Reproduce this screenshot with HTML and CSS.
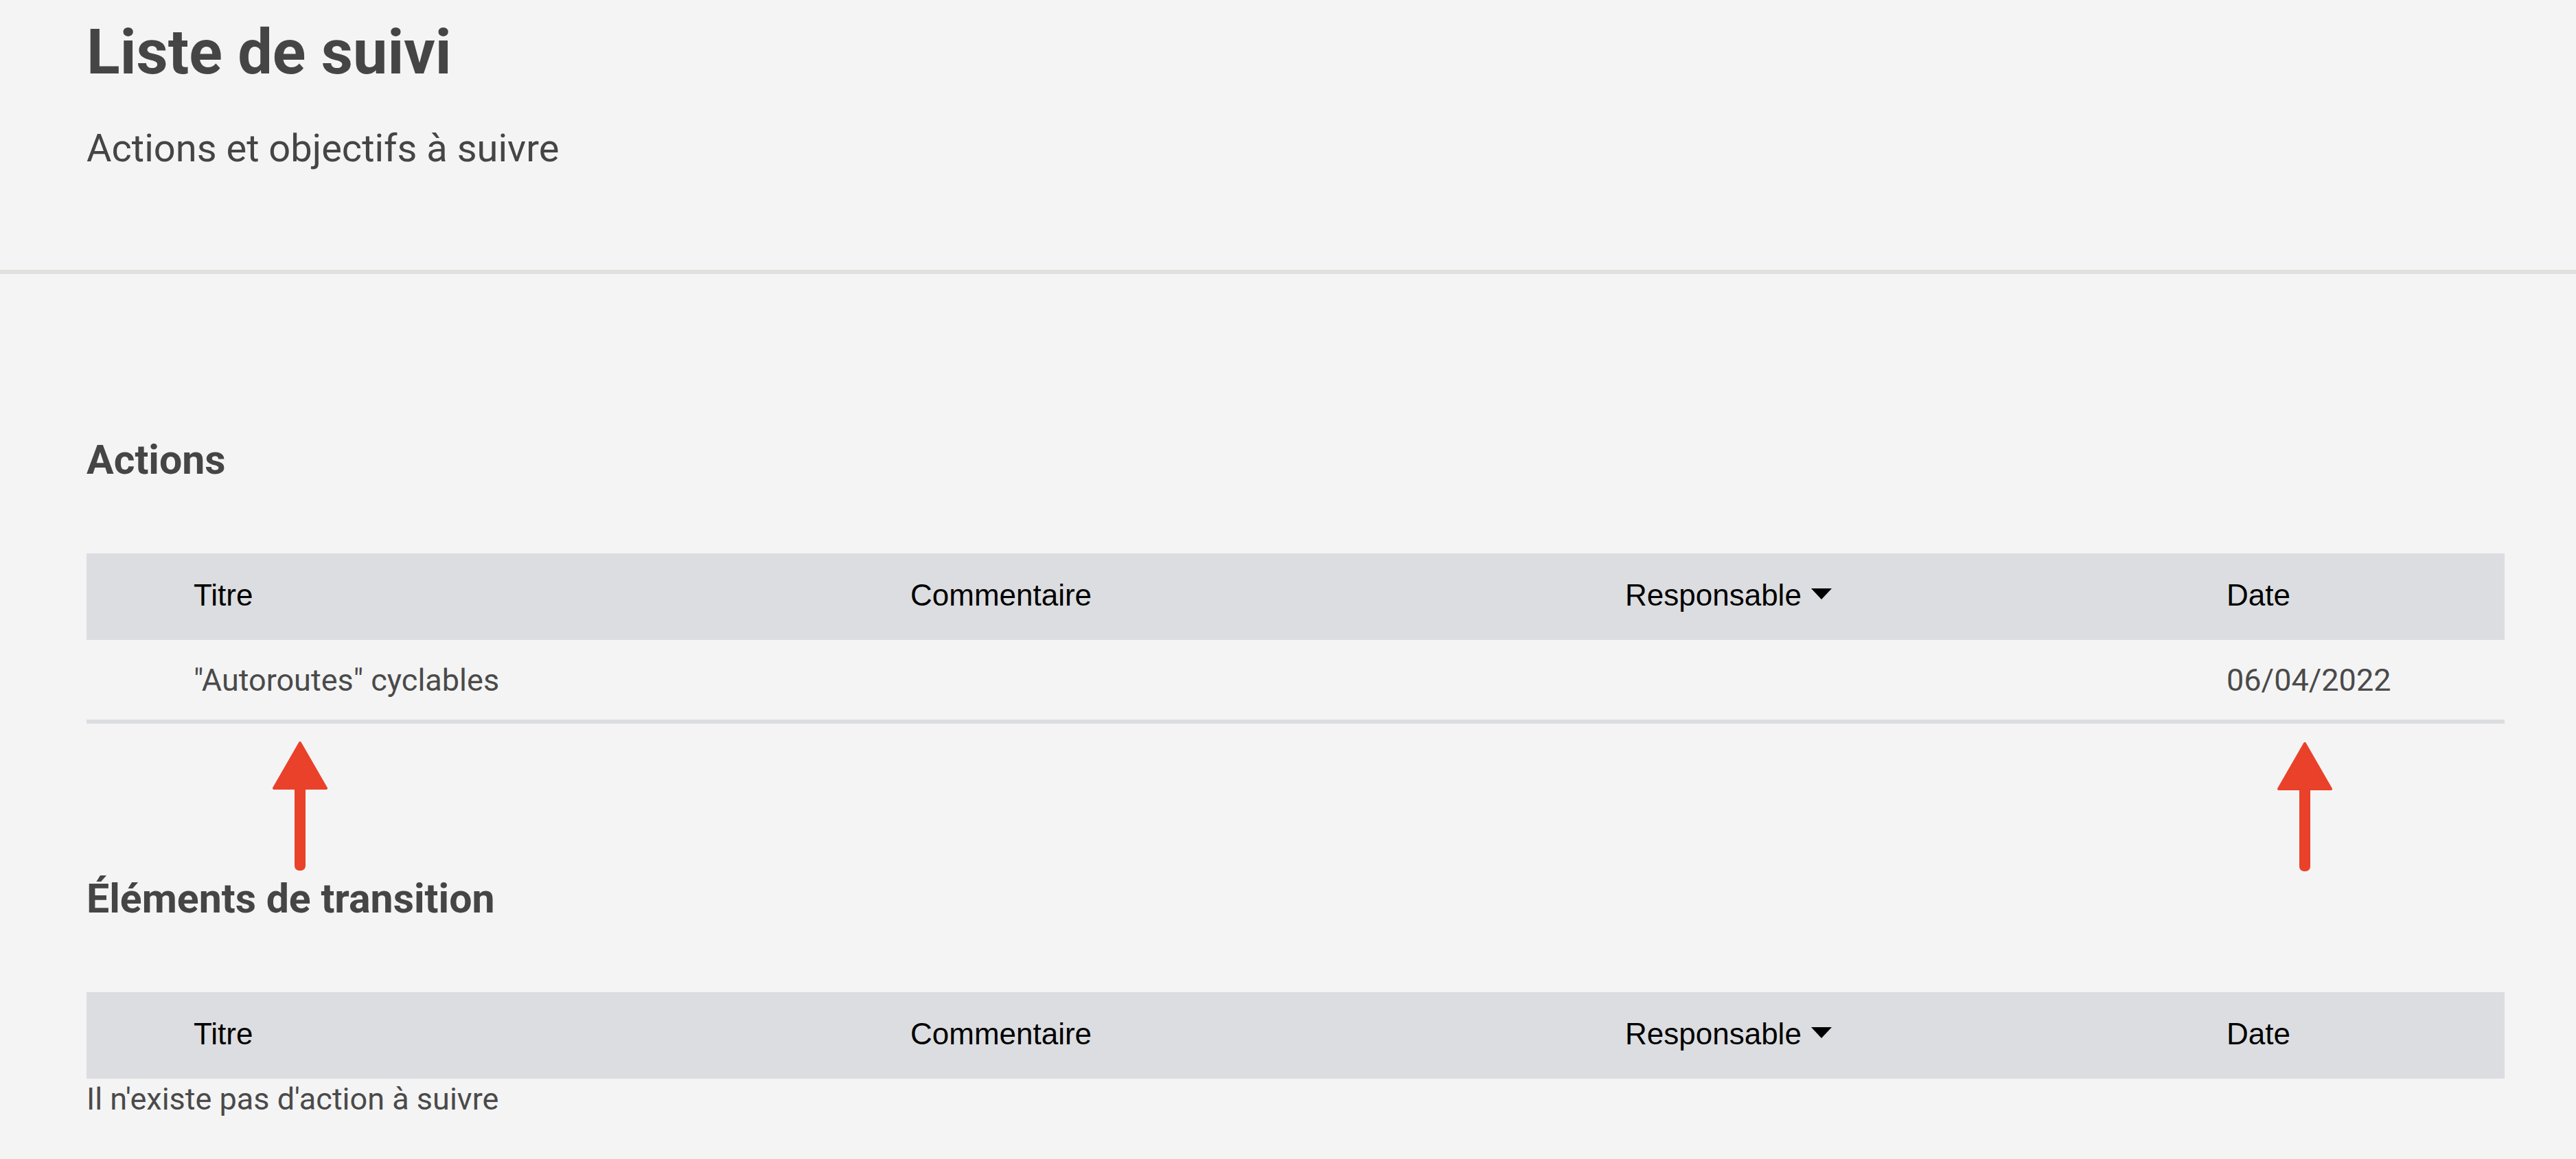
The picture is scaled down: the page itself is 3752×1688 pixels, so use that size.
FILE: index.html
```html
<!DOCTYPE html>
<html lang="fr">
<head>
    <meta charset="UTF-8">
    <meta name="viewport" content="width=device-width, initial-scale=1.0">
    <title>Liste de suivi</title>
    <link rel="stylesheet" href="styles.css">
</head>
<body>
    <header class="page-header">
        <h1>Liste de suivi</h1>
        <p class="subtitle">Actions et objectifs à suivre</p>
    </header>

    <main class="content">
        <section class="block">
            <h2>Actions</h2>
            <table class="follow-table">
                <colgroup>
                    <col class="col-title">
                    <col class="col-comment">
                    <col class="col-owner">
                    <col class="col-date">
                </colgroup>
                <thead>
                    <tr>
                        <th>Titre</th>
                        <th>Commentaire</th>
                        <th>Responsable<span class="sort-caret"></span></th>
                        <th>Date</th>
                    </tr>
                </thead>
                <tbody>
                    <tr>
                        <td>"Autoroutes" cyclables</td>
                        <td></td>
                        <td></td>
                        <td>06/04/2022</td>
                    </tr>
                </tbody>
            </table>
        </section>

        <section class="block">
            <h2>Éléments de transition</h2>
            <table class="follow-table">
                <colgroup>
                    <col class="col-title">
                    <col class="col-comment">
                    <col class="col-owner">
                    <col class="col-date">
                </colgroup>
                <thead>
                    <tr>
                        <th>Titre</th>
                        <th>Commentaire</th>
                        <th>Responsable<span class="sort-caret"></span></th>
                        <th>Date</th>
                    </tr>
                </thead>
            </table>
            <p class="empty">Il n'existe pas d'action à suivre</p>
        </section>
    </main>

    <!-- red pointers under the title and date cells -->
    <svg class="pointer pointer-title" viewBox="0 0 80 188">
        <path d="M40 2 L78 68 L2 68 Z" fill="#e9412a" stroke="#e9412a" stroke-width="4" stroke-linejoin="round"/>
        <rect x="32" y="60" width="16" height="128" rx="7" fill="#e9412a"/>
    </svg>
    <svg class="pointer pointer-date" viewBox="0 0 80 188">
        <path d="M40 2 L78 68 L2 68 Z" fill="#e9412a" stroke="#e9412a" stroke-width="4" stroke-linejoin="round"/>
        <rect x="32" y="60" width="16" height="128" rx="7" fill="#e9412a"/>
    </svg>
</body>
</html>
```

FILE: styles.css
```css
body {
    margin: 0;
    background-color: #f4f4f4;
    font-family: 'Roboto', 'Liberation Sans', sans-serif;
    color: #454545;
    position: relative;
}

.page-header {
    padding: 24px 104px 143px 126px;
    border-bottom: 6px solid #e0e1de;
}

h1 {
    margin: 0;
    font-size: 90px;
    line-height: 106px;
    font-weight: 700;
}

.subtitle {
    margin: 52px 0 0;
    font-size: 56px;
    line-height: 68px;
}

.content {
    padding: 236px 104px 0 126px;
}

.block + .block {
    margin-top: 220px;
}

h2 {
    margin: 0 0 101px;
    font-size: 59px;
    line-height: 70px;
    font-weight: 700;
}

.follow-table {
    width: 100%;
    table-layout: fixed;
    border-collapse: collapse;
}

.col-title { width: 1200px; }
.col-comment { width: 1041px; }
.col-owner { width: 876px; }
.col-date { width: 405px; }

.follow-table th,
.follow-table td {
    padding: 0;
    text-align: left;
}

.follow-table th:first-child,
.follow-table td:first-child {
    padding-left: 156px;
}

.follow-table thead tr {
    background-color: #dcdde0;
    height: 126px;
}

.follow-table th {
    font-family: 'Liberation Sans', Arial, sans-serif;
    font-size: 44px;
    font-weight: 400;
    color: #000;
    padding-bottom: 4px;
}

.sort-caret {
    display: inline-block;
    width: 0;
    height: 0;
    margin-left: 14px;
    border-left: 15px solid transparent;
    border-right: 15px solid transparent;
    border-top: 16px solid #000;
    vertical-align: 9px;
}

.follow-table tbody tr {
    height: 119px;
    border-bottom: 6px solid #dcdde0;
}

.follow-table td {
    font-size: 45px;
    color: #4a4a4a;
}

.empty {
    margin: 3px 0 0;
    font-size: 45px;
    color: #4a4a4a;
}

.pointer {
    position: absolute;
    width: 80px;
    height: 188px;
}

.pointer-title {
    left: 397px;
    top: 1080px;
}

.pointer-date {
    left: 3317px;
    top: 1081px;
}
```
